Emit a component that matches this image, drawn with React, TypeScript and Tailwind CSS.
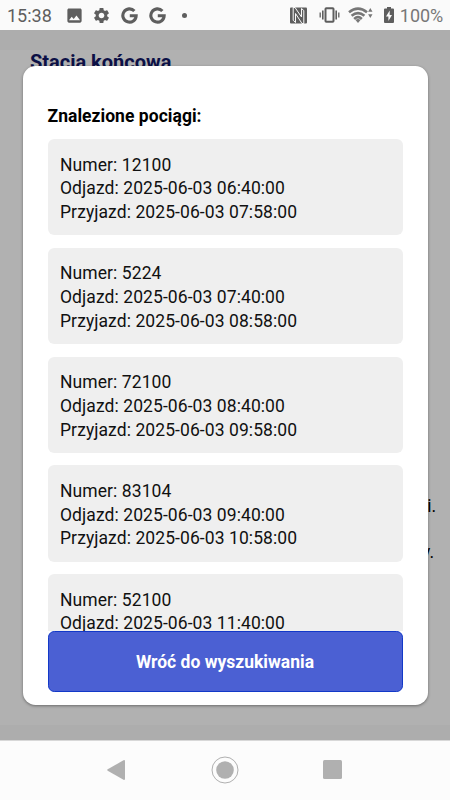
import type { ReactNode } from 'react';

type Train = {
  number: string;
  departure: string;
  arrival?: string;
};

const trains: Train[] = [
  { number: '12100', departure: '2025-06-03 06:40:00', arrival: '2025-06-03 07:58:00' },
  { number: '5224', departure: '2025-06-03 07:40:00', arrival: '2025-06-03 08:58:00' },
  { number: '72100', departure: '2025-06-03 08:40:00', arrival: '2025-06-03 09:58:00' },
  { number: '83104', departure: '2025-06-03 09:40:00', arrival: '2025-06-03 10:58:00' },
  { number: '52100', departure: '2025-06-03 11:40:00' },
];

function Icon({ className, children }: { className: string; children: ReactNode }) {
  return (
    <svg viewBox="0 0 24 24" fill="currentColor" className={`shrink-0 ${className}`}>
      {children}
    </svg>
  );
}

function GoogleIcon({ className }: { className: string }) {
  return (
    <Icon className={className}>
      <path
        d="M18.900 5.600A9.400 9.400 0 1 0 21.400 12.300h-9"
        fill="none"
        stroke="currentColor"
        strokeWidth="4.400"
      />
    </Icon>
  );
}

function StatusBar() {
  return (
    <header className="flex h-[30px] shrink-0 items-center bg-[#fafafa] pl-[7px] pr-[7px] text-[#5e5e5e]">
      <span className="w-[58px] pt-px text-[18px] leading-[30px]">15:38</span>
      <Icon className="size-[19px]">
        <path d="M21 19V5c0-1.100-.9-2-2-2H5c-1.100 0-2 .9-2 2v14c0 1.100.9 2 2 2h14c1.100 0 2-.9 2-2zM8.500 13.500l2.500 3.010L14.500 12l4.500 6H5l3.500-4.500z" />
      </Icon>
      <Icon className="ml-2 size-[19px]">
        <path d="M19.140 12.940c.04-.3.06-.61.06-.94 0-.32-.02-.64-.07-.94l2.030-1.580c.18-.14.23-.41.12-.61l-1.920-3.320c-.12-.22-.37-.29-.59-.22l-2.390.96c-.5-.38-1.030-.7-1.620-.94l-.36-2.540c-.04-.24-.24-.41-.48-.41h-3.840c-.24 0-.43.17-.47.41l-.36 2.540c-.59.24-1.130.57-1.620.94l-2.390-.96c-.22-.08-.47 0-.59.22L2.740 8.870c-.12.21-.08.47.12.61l2.030 1.580c-.05.3-.09.63-.09.94s.02.64.07.94l-2.030 1.580c-.18.14-.23.41-.12.61l1.920 3.320c.12.22.37.29.59.22l2.390-.96c.5.38 1.030.7 1.620.94l.36 2.540c.05.24.24.41.48.41h3.840c.24 0 .44-.17.47-.41l.36-2.540c.59-.24 1.130-.56 1.620-.94l2.390.96c.22.08.47 0 .59-.22l1.920-3.320c.12-.22.07-.47-.12-.61l-2.010-1.580zM12 15.600c-1.980 0-3.600-1.620-3.600-3.600s1.620-3.600 3.600-3.600 3.600 1.620 3.600 3.600-1.620 3.600-3.600 3.600z" />
      </Icon>
      <GoogleIcon className="ml-[10px] size-[17px]" />
      <GoogleIcon className="ml-[11px] size-[17px]" />
      <span className="ml-[16px] size-[5px] rounded-full bg-[#5e5e5e]" />

      <div className="ml-auto flex items-center">
        {/* NFC */}
        <svg viewBox="0 0 17 17" className="size-[17px]">
          <path d="M1 .5h15q1 0 1 1v14q0 1-1 1H1q-1 0-1-1v-14q0-1 1-1z" fill="currentColor" />
          <path
            d="M5 .5H3.200v12.800L5.500 15.500V6.500L12 16.500h1.800V3.500L11.500 1.500V10L5 .5"
            fill="none"
            stroke="#fafafa"
            strokeWidth="1"
          />
        </svg>
        {/* Vibration */}
        <svg viewBox="0 0 21 16" className="ml-3 h-4 w-[21px]" fill="none" stroke="currentColor">
          <rect x="6.500" y="1.300" width="8" height="13.400" rx="0.800" strokeWidth="2" />
          <path d="M3.800 3.500v9M17.200 3.500v9" strokeWidth="1.600" />
          <path d="M1.200 5.500v5M19.800 5.500v5" strokeWidth="1.300" />
        </svg>
        {/* Wi-Fi with traffic arrows */}
        <svg viewBox="0 0 25 16" className="ml-2 h-4 w-[25px]">
          <g fill="none" stroke="#777" strokeWidth="2.700">
            <path d="M1 5.200Q10 -1.800 19 5.200" />
            <path d="M3.600 8.700Q10 3.600 16.400 8.700" />
            <path d="M6.200 11.900Q10 8.500 13.800 11.900" />
          </g>
          <path d="M7.500 12.900Q10 11.200 12.500 12.900L10 15.900z" fill="#777" />
          <path d="M22.300 1l2.200 3.800h-4.400zM22.300 11l2.200-3.800h-4.400z" fill="#777" />
        </svg>
        {/* Battery, charging */}
        <svg viewBox="0 0 10 16" className="ml-[11px] h-4 w-2.5">
          <path d="M3 0h4v1.500h2q1 0 1 1V15q0 1-1 1H1q-1 0-1-1V2.500q0-1 1-1h2z" fill="#5e5e5e" />
          <path d="M5.700 3.500L2 9.500h2.400V14L8 8H5.700z" fill="#fafafa" />
        </svg>
        <span className="ml-[6px] pt-px text-[18px] leading-[30px] tracking-[-0.1px] text-[#777]">100%</span>
      </div>
    </header>
  );
}

function TrainCard({ train }: { train: Train }) {
  return (
    <li className="min-h-[96.250px] shrink-0 rounded-[6.250px] bg-[#efefef] px-[12.500px] pb-[10.400px] pt-[14.600px] text-[17.500px] leading-[23.750px] tracking-[0.080px] text-[#111]">
      <p>Numer: {train.number}</p>
      <p>Odjazd: {train.departure}</p>
      {train.arrival && <p>Przyjazd: {train.arrival}</p>}
    </li>
  );
}

function ResultsModal() {
  return (
    <section className="absolute left-[22.500px] top-[35.500px] flex h-[639px] w-[405px] flex-col rounded-[12.500px] bg-white px-[25px] pb-[12.500px] pt-[38px] shadow-[0_1px_3px_rgba(0,0,0,0.4)]">
      <h2 className="mb-[11.500px] text-[17.500px] font-bold leading-6 tracking-[0.040px] text-black">
        Znalezione pociągi:
      </h2>
      <ul className="flex min-h-0 flex-1 flex-col gap-[12.500px] overflow-hidden">
        {trains.map((train) => (
          <TrainCard key={train.number} train={train} />
        ))}
      </ul>
      <button className="h-[61px] shrink-0 rounded-[6.250px] border border-[#1238c8] bg-[#4b60d3] pt-[2px] text-[17.500px] font-bold text-white">
        Wróć do wyszukiwania
      </button>
    </section>
  );
}

function NavigationBar() {
  return (
    <nav className="flex h-[60px] shrink-0 items-center border-t border-[#d8d8d8] bg-[#fcfcfc] pb-[2px] pl-[107px] text-[#b0b0b0]">
      <svg viewBox="0 0 18 20" className="h-5 w-[18px]" fill="currentColor">
        <path d="M16.500.3Q18-.4 18 1.200v17.600q0 1.600-1.500.9L.7 10.700q-1-.7 0-1.400z" />
      </svg>
      <svg viewBox="0 0 28 28" className="ml-[86px] size-7">
        <circle cx="14" cy="14" r="13" fill="none" stroke="currentColor" />
        <circle cx="14" cy="14" r="8.800" fill="currentColor" />
      </svg>
      <span className="ml-[84px] size-[19px] rounded-[1.500px] bg-[#b0b0b0]" />
    </nav>
  );
}

export default function App() {
  return (
    <div className="flex h-[800px] w-[450px] flex-col overflow-hidden font-['Roboto',sans-serif]">
      <StatusBar />
      <main className="relative min-h-0 flex-1 border-t-[20px] border-b-[15px] border-y-[#adadad] bg-[#b1b1b1]">
        <div className="-mt-[20px] pl-[30px] pr-[14px] pt-[18px]">
          <h1 className="text-[20px] font-bold leading-7 text-[#0c1046]">Stacja końcowa</h1>
          <div className="mt-[418px] text-right text-[17.500px] leading-6 text-black">
            <p>i.</p>
            <p className="mt-[22px] pr-[2px]">y.</p>
          </div>
        </div>
        <div className="absolute inset-x-0 -top-[20px] bottom-0">
          <ResultsModal />
        </div>
      </main>
      <NavigationBar />
    </div>
  );
}
